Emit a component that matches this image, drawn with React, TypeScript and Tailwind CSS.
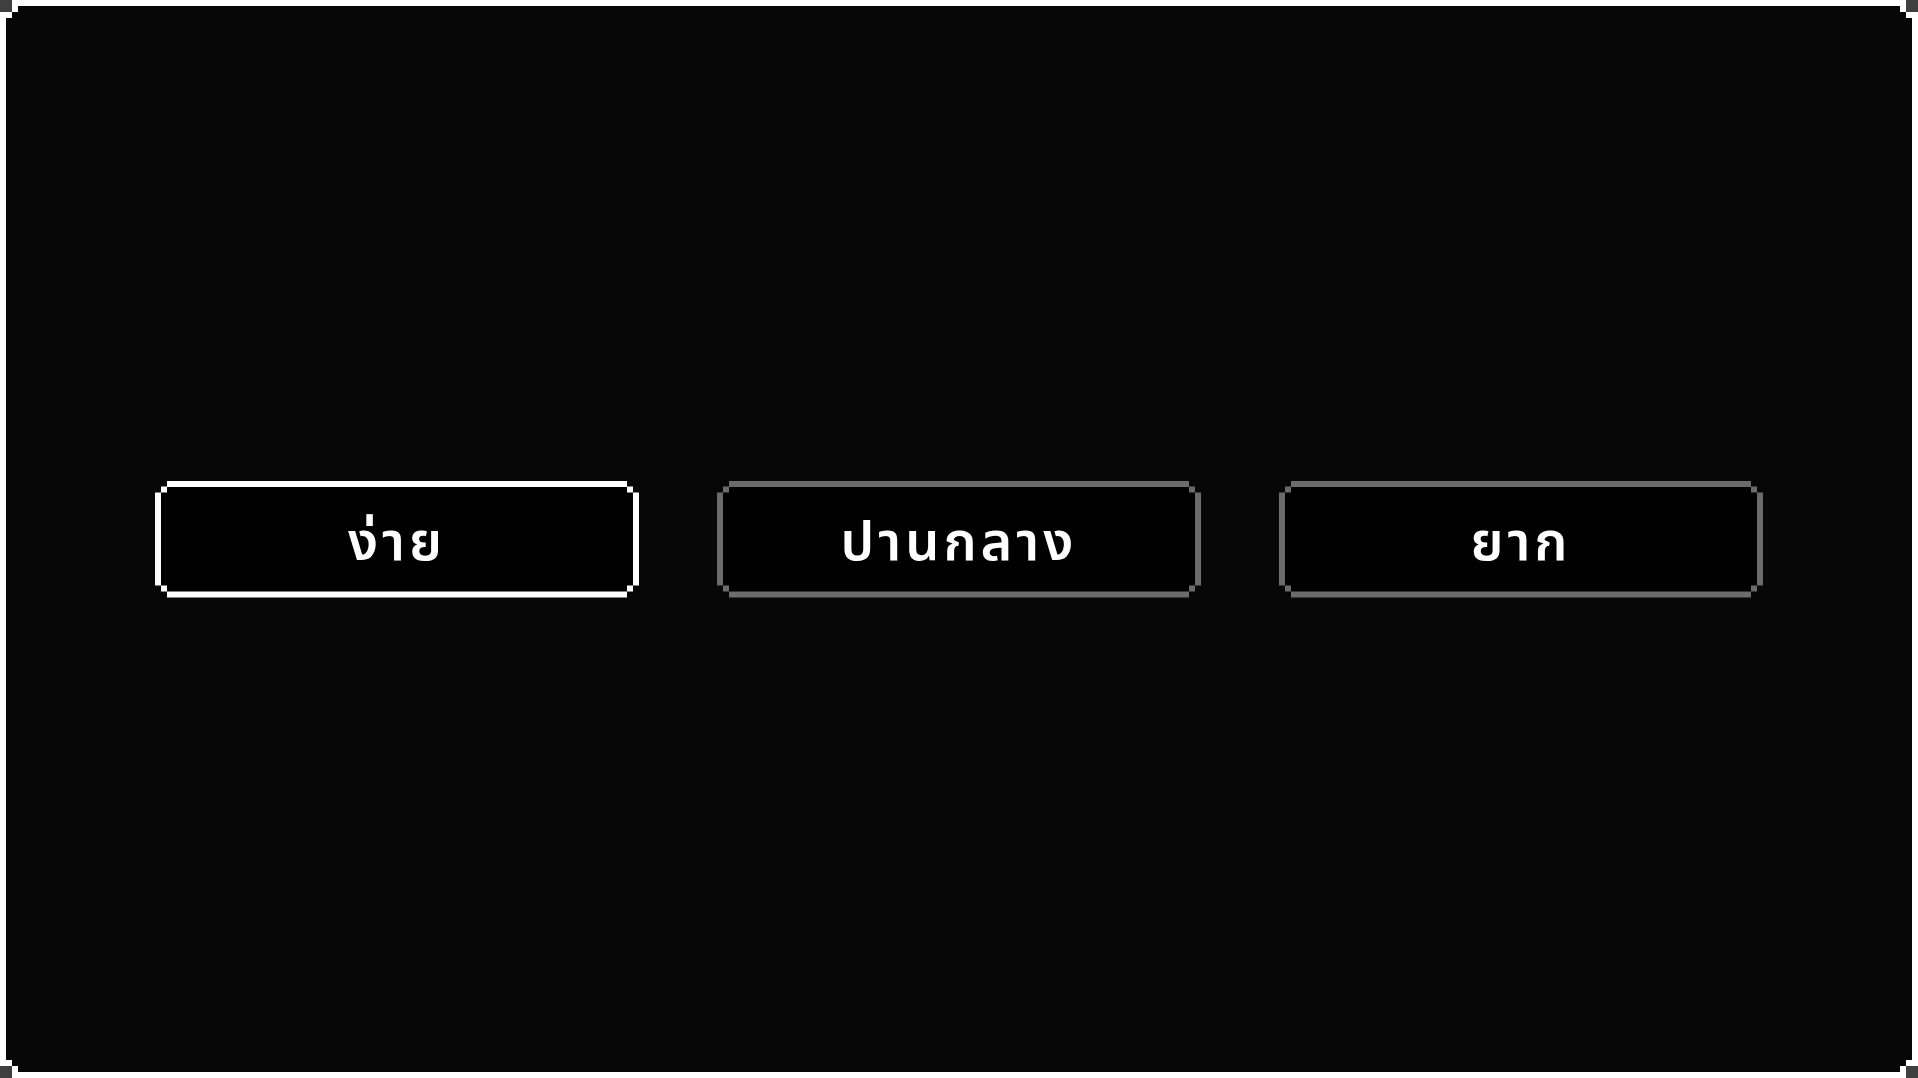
import React from "react";

const options = ["ง่าย", "ปานกลาง", "ยาก"];

const DifficultyButton: React.FC<{ label: string; selected?: boolean }> = ({ label, selected }) => {
  return (
    <button
      className={
        "w-[484px] h-[117px] p-[6px] [clip-path:polygon(12px_0,calc(100%_-_12px)_0,calc(100%_-_12px)_6px,calc(100%_-_6px)_6px,calc(100%_-_6px)_12px,100%_12px,100%_calc(100%_-_12px),calc(100%_-_6px)_calc(100%_-_12px),calc(100%_-_6px)_calc(100%_-_6px),calc(100%_-_12px)_calc(100%_-_6px),calc(100%_-_12px)_100%,12px_100%,12px_calc(100%_-_6px),6px_calc(100%_-_6px),6px_calc(100%_-_12px),0_calc(100%_-_12px),0_12px,6px_12px,6px_6px,12px_6px)] " +
        (selected ? "bg-white" : "bg-[#6b6b6b]")
      }
    >
      <div className="size-full bg-black flex items-center justify-center pt-[10px] [clip-path:polygon(6px_0,calc(100%_-_6px)_0,calc(100%_-_6px)_6px,100%_6px,100%_calc(100%_-_6px),calc(100%_-_6px)_calc(100%_-_6px),calc(100%_-_6px)_100%,6px_100%,6px_calc(100%_-_6px),0_calc(100%_-_6px),0_6px,6px_6px)]">
        <span className="text-white text-[54px] leading-none font-semibold tracking-[4px] font-['Noto_Sans_Thai','Noto_Sans','DejaVu_Sans',sans-serif]">
          {label}
        </span>
      </div>
    </button>
  );
};

export default function App() {
  return (
    <div className="h-screen w-screen bg-[#3f3f3f] overflow-hidden">
      <div className="size-full bg-white p-[6px] [clip-path:polygon(12px_0,calc(100%_-_12px)_0,calc(100%_-_12px)_12px,100%_12px,100%_calc(100%_-_12px),calc(100%_-_12px)_calc(100%_-_12px),calc(100%_-_12px)_100%,12px_100%,12px_calc(100%_-_12px),0_calc(100%_-_12px),0_12px,12px_12px)]">
        <div className="size-full bg-[#070707] flex items-center justify-center gap-[78px] [clip-path:polygon(12px_0,calc(100%_-_12px)_0,calc(100%_-_12px)_6px,calc(100%_-_6px)_6px,calc(100%_-_6px)_12px,100%_12px,100%_calc(100%_-_12px),calc(100%_-_6px)_calc(100%_-_12px),calc(100%_-_6px)_calc(100%_-_6px),calc(100%_-_12px)_calc(100%_-_6px),calc(100%_-_12px)_100%,12px_100%,12px_calc(100%_-_6px),6px_calc(100%_-_6px),6px_calc(100%_-_12px),0_calc(100%_-_12px),0_12px,6px_12px,6px_6px,12px_6px)]">
          {options.map((o, i) => (
            <DifficultyButton key={o} label={o} selected={i === 0} />
          ))}
        </div>
      </div>
    </div>
  );
}
